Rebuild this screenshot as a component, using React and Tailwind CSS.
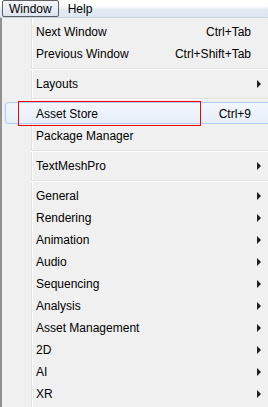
import React from 'react';

const items = [
  { label: 'Next Window', shortcut: 'Ctrl+Tab' },
  { label: 'Previous Window', shortcut: 'Ctrl+Shift+Tab' },
  'sep',
  { label: 'Layouts', sub: true },
  'sep',
  { label: 'Asset Store', shortcut: 'Ctrl+9', active: true },
  { label: 'Package Manager' },
  'sep',
  { label: 'TextMeshPro', sub: true },
  'sep',
  { label: 'General', sub: true },
  { label: 'Rendering', sub: true },
  { label: 'Animation', sub: true },
  { label: 'Audio', sub: true },
  { label: 'Sequencing', sub: true },
  { label: 'Analysis', sub: true },
  { label: 'Asset Management', sub: true },
  { label: '2D', sub: true },
  { label: 'AI', sub: true },
  { label: 'XR', sub: true },
];

function MenuRow({ item }) {
  return (
    <div
      className={
        item.active
          ? 'ml-[3px] h-[22px] flex items-center pl-[30px] pt-[1px] border border-[#aecbf0] rounded-l-[3px] bg-[linear-gradient(#f3f7fc,#e6eef9)]'
          : 'ml-[3px] h-[22px] flex items-center pl-[30px] pt-[1px] border border-transparent'
      }
    >
      <span className="flex-1 whitespace-nowrap">{item.label}</span>
      {item.shortcut && <span className="whitespace-nowrap">{item.shortcut}</span>}
      <div className="w-[20px] flex items-center">
        {item.sub && (
          <div className="ml-[6px] w-0 h-0 border-y-[4px] border-y-transparent border-l-[4px] border-l-[#1e1e1e]" />
        )}
      </div>
    </div>
  );
}

export default function App() {
  return (
    <div className="relative w-[268px] h-[407px] overflow-hidden bg-[#f0f0f0] font-['Liberation_Sans',Arial,sans-serif] text-[12px] text-black">
      {/* menu bar */}
      <div className="h-[18px] flex items-stretch pl-[2px] border-b border-[#c9d2e1] bg-[linear-gradient(#ffffff_0%,#ffffff_35%,#e4eaf4_55%,#dfe6f2_100%)]">
        <div className="px-[6px] flex items-center border border-[#5f5f5f] rounded-[2px] bg-[linear-gradient(#f4f6fa,#dde4f0)]">
          Window
        </div>
        <div className="ml-[9px] flex items-center">Help</div>
      </div>

      {/* dropdown */}
      <div className="w-[272px] h-[389px] border-l-2 border-[#8f8f8f] pt-[2px] bg-[linear-gradient(to_right,#f0f0f0_29px,#e2e3e3_29px,#e2e3e3_30px,#ffffff_30px,#ffffff_31px,#f0f0f0_31px)]">
        {items.map((item, i) =>
          item === 'sep' ? (
            <div key={i} className="h-[8px] pt-[4px] ml-[29px]">
              <div className="h-[2px] border-t border-[#e0e0e0] border-b border-b-white" />
            </div>
          ) : (
            <MenuRow key={i} item={item} />
          )
        )}
      </div>

      {/* red annotation box */}
      <div className="absolute left-[18px] top-[101px] w-[183px] h-[25px] border border-[#ff0000]" />
    </div>
  );
}
